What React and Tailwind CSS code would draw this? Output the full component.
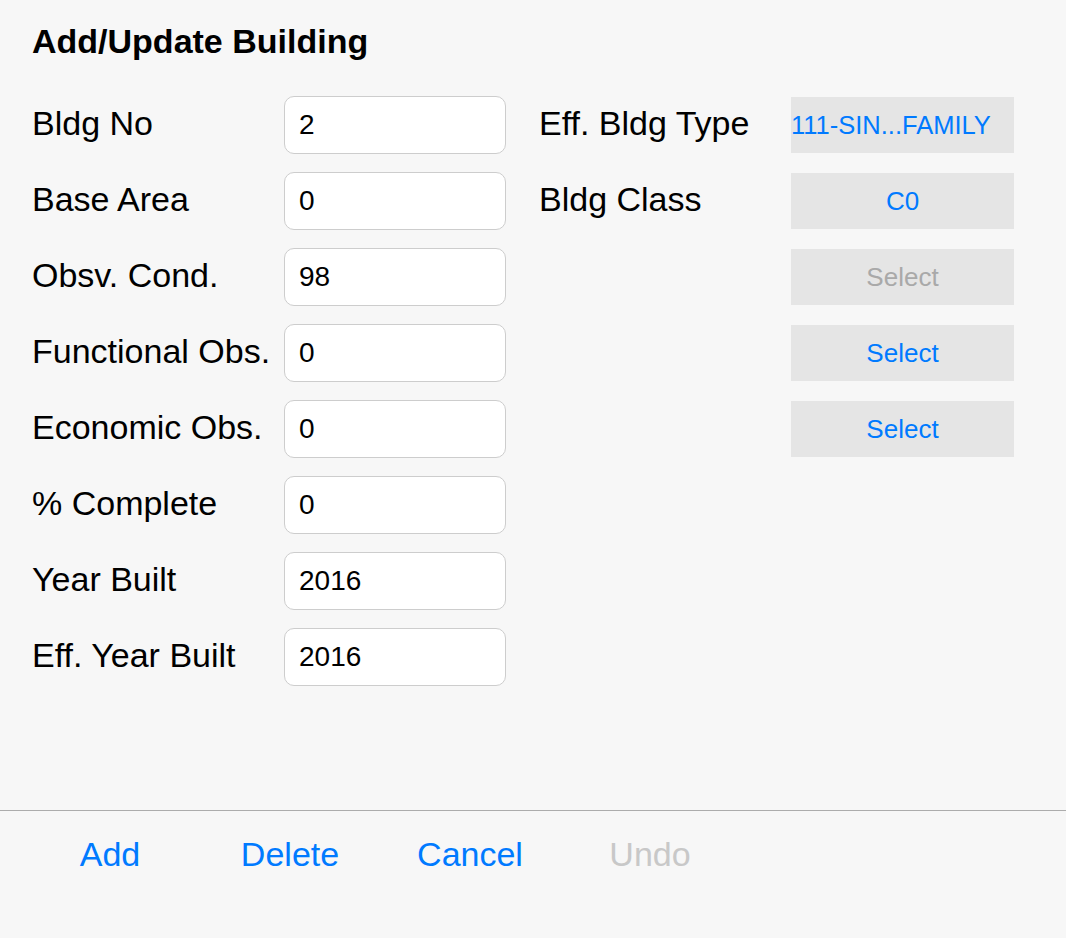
const leftFields = [
  { label: "Bldg No", value: "2" },
  { label: "Base Area", value: "0" },
  { label: "Obsv. Cond.", value: "98" },
  { label: "Functional Obs.", value: "0" },
  { label: "Economic Obs.", value: "0" },
  { label: "% Complete", value: "0" },
  { label: "Year Built", value: "2016" },
  { label: "Eff. Year Built", value: "2016" },
];

const rightFields = [
  { label: "Eff. Bldg Type", value: "111-SIN...FAMILY", wide: true },
  { label: "Bldg Class", value: "C0" },
  { label: "", value: "Select", disabled: true },
  { label: "", value: "Select" },
  { label: "", value: "Select" },
];

const actions = [
  { label: "Add" },
  { label: "Delete" },
  { label: "Cancel" },
  { label: "Undo", disabled: true },
];

const App = () => {
  return (
    <div
      className="w-[1066px] h-[938px] bg-[#f7f7f7] flex flex-col text-black"
      style={{ fontFamily: '"Liberation Sans", Arial, sans-serif' }}
    >
      <div className="flex-1 pl-[32px] pt-[22px]">
        <h1 className="text-[34px] font-bold leading-[39px]">Add/Update Building</h1>

        <div className="flex mt-[35px]">
          <div className="flex flex-col gap-[18px]">
            {leftFields.map((f) => (
              <div key={f.label} className="flex items-center h-[58px]">
                <span className="w-[252px] text-[34px] pb-[4px]">{f.label}</span>
                <div className="w-[222px] h-[58px] bg-white border border-[#cdcdcd] rounded-[10px] flex items-center pl-[14px] text-[28px]">
                  {f.value}
                </div>
              </div>
            ))}
          </div>

          <div className="flex flex-col gap-[18px] ml-[33px]">
            {rightFields.map((f, i) => (
              <div key={i} className="flex items-center h-[58px]">
                <span className="w-[252px] text-[34px] pb-[4px]">{f.label}</span>
                <button
                  className={`w-[223px] h-[56px] bg-[#e5e5e5] flex items-center overflow-hidden whitespace-nowrap ${
                    f.wide ? "justify-start text-[25.5px]" : "justify-center text-[26px]"
                  } ${f.disabled ? "text-[#a9a9a9]" : "text-[#007aff]"}`}
                >
                  {f.value}
                </button>
              </div>
            ))}
          </div>
        </div>
      </div>

      <div className="h-[128px] border-t border-[#acacac] flex pl-[20px] pb-[40px] items-center">
        {actions.map((a) => (
          <button
            key={a.label}
            className={`w-[180px] text-center text-[34px] ${
              a.disabled ? "text-[#c8c8c8]" : "text-[#007aff]"
            }`}
          >
            {a.label}
          </button>
        ))}
      </div>
    </div>
  );
};

export default App;
